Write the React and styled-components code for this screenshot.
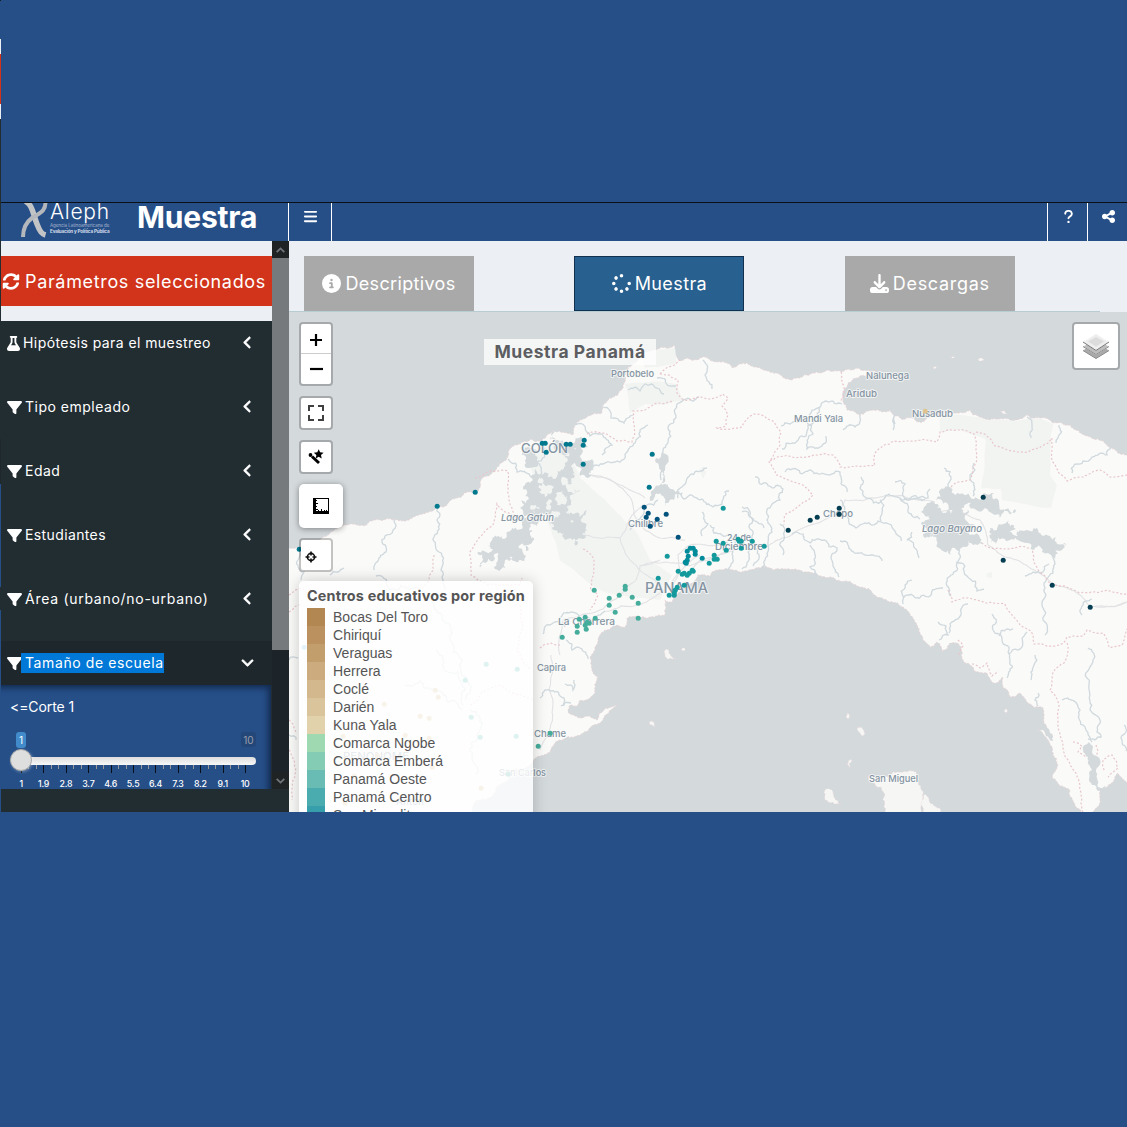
import React from "react";
import styled, { createGlobalStyle, css } from "styled-components";
import { FaBars, FaCircleInfo, FaDownload, FaFilter, FaFlask, FaQuestion, FaShareNodes, FaSpinner, FaAngleLeft, FaAngleDown } from "react-icons/fa6";
import { FaSyncAlt } from "react-icons/fa";

const sans = `Inter, "Open Sans", sans-serif`;

const GlobalStyle = createGlobalStyle`
  * { box-sizing: border-box; }
  body { margin: 0; background: #264f88; font-family: ${sans}; }
`;

const Page = styled.div`
  display: flex;
  width: 1127px;
  height: 1127px;
  background: #264f88;
  overflow: hidden;
`;
const Edge = styled.div`
  display: flex;
  flex-direction: column;
  flex: 0 0 1px;
`;
const EdgeBand = styled.div`
  flex: 0 0 ${(p) => p.$h}px;
  background: ${(p) => p.$c};
`;
const Frame = styled.div`
  flex: 1;
  min-width: 0;
  display: flex;
  flex-direction: column;
  padding-top: 202px;
`;
const Header = styled.header`
  flex: 0 0 39px;
  display: flex;
  border-top: 1px solid #0b1016;
  color: #fff;
  overflow: hidden;
`;
const Brand = styled.div`
  width: 287px;
  display: flex;
  align-items: flex-start;
  padding-left: 19px;
`;
const LogoMark = styled.svg`
  width: 30px;
  height: 38px;
  flex: none;
`;
const LogoWords = styled.div`
  width: 87px;
  display: flex;
  flex-direction: column;
  white-space: nowrap;
`;
const LogoName = styled.span`
  font: 300 21px/18px ${sans};
  letter-spacing: 0.7px;
  height: 20px;
`;
const LogoLine = styled.span`
  font: ${(p) => (p.$bold ? 700 : 400)} 4.6px/5.6px ${sans};
  letter-spacing: ${(p) => p.$ls}px;
  color: ${(p) => (p.$bold ? "#d7dfeb" : "#a3b3cd")};
`;
const Title = styled.h1`
  margin: 0;
  font: 700 30px/28px ${sans};
  letter-spacing: -0.2px;
`;
const HeaderCell = styled.div`
  width: ${(p) => p.$w}px;
  height: 38px;
  border-left: 1px solid #fff;
  border-right: ${(p) => (p.$end ? "1px solid #fff" : "0")};
  display: flex;
  justify-content: center;
  padding: 5.5px 0 0 1px;
  font-size: 15px;
`;
const Spacer = styled.div`
  flex: 1;
`;
const Body = styled.div`
  flex: 0 0 571px;
  display: flex;
  background: #ecf0f5;
`;
const Sidebar = styled.aside`
  flex: 0 0 288px;
  display: flex;
  flex-direction: column;
  background: #222d32;
  padding-bottom: 23px;
`;
const SideView = styled.div`
  flex: 1;
  display: flex;
  min-height: 0;
`;
const SideScroll = styled.div`
  width: 271px;
  height: 548px;
  overflow: hidden;
  display: flex;
  flex-direction: column;
`;
const ParamsWrap = styled.div`
  flex: 0 0 80px;
  padding: 15px 0;
  background: #ecf0f5;
`;
const ParamsButton = styled.button`
  display: flex;
  align-items: center;
  gap: 5px;
  width: 271px;
  height: 50px;
  padding: 0 0 0 1px;
  border: 0;
  background: #d2341b;
  color: #fff;
  font: 400 18px ${sans};
  letter-spacing: 0.66px;
  white-space: nowrap;
  svg { width: 18px; height: 17px; flex: none; }
`;
const Menu = styled.nav`
  display: flex;
  flex-direction: column;
  gap: 20px;
`;
const MenuItem = styled.div`
  height: 44px;
  flex: none;
  display: flex;
  align-items: center;
  padding: 0 17px 0 6px;
  color: #fff;
  background: ${(p) => (p.$active ? "#1e272c" : "transparent")};
  font-size: 14px;
  > svg:first-child { width: ${(p) => (p.$flask ? 13 : 15)}px; height: 15px; flex: none; margin-right: ${(p) => (p.$flask ? 0 : -1)}px; }
  > svg:last-child { margin-left: auto; font-size: 15px; position: relative; top: -1px; stroke: #fff; stroke-width: 24px; }
`;
const MenuText = styled.span`
  padding-left: ${(p) => (p.$flask ? 3 : 4)}px;
  line-height: 20px;
  letter-spacing: ${(p) => p.$ls || 0}px;
  ${(p) => p.$selected && css`background: #0078d7;`}
`;
const Panel = styled.div`
  width: 270px;
  flex: 0 0 104px;
  padding: 11px 15px 0 9px;
  color: #fff;
  background: #264f88;
  box-shadow: inset -5px 5px 6px -2px #132b50;
`;
const PanelLabel = styled.div`
  font-size: 14px;
  line-height: 22px;
  letter-spacing: -0.1px;
`;
const Bubbles = styled.div`
  margin-top: 14px;
  display: flex;
  justify-content: space-between;
  padding-left: 6px;
  height: 25px;
`;
const Bubble = styled.span`
  width: ${(p) => (p.$muted ? 15 : 10)}px;
  height: ${(p) => (p.$muted ? 15 : 16)}px;
  border-radius: 3px;
  font-size: 10px;
  line-height: 16px;
  text-align: center;
  background: ${(p) => (p.$muted ? "#24477a" : "#428bca")};
  color: ${(p) => (p.$muted ? "#9a9fa8" : "#fff")};
`;
const Track = styled.div`
  position: relative;
  height: 8px;
  margin-left: 1px;
  border-radius: 5px;
  background: linear-gradient(#ddd, #f8f8f8);
`;
const Handle = styled.span`
  position: absolute;
  left: -1px;
  top: -8px;
  width: 22px;
  height: 22px;
  border: 1px solid #aaa;
  border-radius: 50%;
  background: #dedede;
  box-shadow: 1px 1px 3px rgba(255, 255, 255, 0.3);
`;
const Ticks = styled.svg`
  display: block;
  width: 246px;
  height: 9px;
`;
const Scale = styled.div`
  display: grid;
  grid-template-columns: repeat(11, 22.4px);
  font-size: 8.8px;
  font-weight: 500;
  line-height: 11px;
  padding-top: 4px;
  text-align: center;
  letter-spacing: -0.2px;
`;
const Scrollbar = styled.div`
  width: 17px;
  display: flex;
  flex-direction: column;
  background: #1c2429;
`;
const ScrollKey = styled.div`
  height: 17px;
  display: flex;
  align-items: center;
  justify-content: center;
  background: #202324;
`;
const Thumb = styled.div`
  height: 392px;
  background: #777a7c;
`;
const Content = styled.main`
  flex: 1;
  min-width: 0;
  display: flex;
  flex-direction: column;
`;
const Tabs = styled.div`
  flex: 0 0 71px;
  width: 811px;
  padding: 15px 0 0 15px;
  display: flex;
  gap: 100.4px;
  border-bottom: 1px solid #b7cdd1;
`;
const Tab = styled.button`
  width: 170px;
  height: 55px;
  flex: none;
  padding: 0;
  display: flex;
  align-items: center;
  justify-content: center;
  gap: 4px;
  color: #fff;
  background: ${(p) => (p.$active ? "#28608f" : "#a9a9a9")};
  border: ${(p) => (p.$active ? "1px solid #12304f" : "0")};
  font: 400 18px ${sans};
  letter-spacing: ${(p) => p.$ls}px;
  svg { width: 19px; height: 19px; }
`;
const MapPane = styled.section`
  position: relative;
  flex: 0 0 500px;
  overflow: hidden;
  background: #d4d9dc;
`;
const MapArt = styled.svg`
  display: block;
  width: 838px;
  height: 500px;
`;
const MapTitle = styled.div`
  position: absolute;
  left: 195px;
  top: 27px;
  width: 172px;
  height: 26px;
  background: rgba(255, 255, 255, 0.75);
  color: #5c5e61;
  font: 700 17.5px/26px ${sans};
  letter-spacing: 0.55px;
  text-align: center;
  white-space: nowrap;
`;
const Controls = styled.div`
  position: absolute;
  left: 10px;
  top: 10px;
  display: flex;
  flex-direction: column;
  gap: 10px;
`;
const Control = styled.div`
  width: 34px;
  border: 2px solid rgba(0, 0, 0, 0.22);
  background: #fff;
  background-clip: padding-box;
  border-radius: 4px;
`;
const ControlCell = styled.div`
  height: ${(p) => p.$h || 30}px;
  display: flex;
  align-items: center;
  justify-content: ${(p) => (p.$left ? "flex-start" : "center")};
  padding: ${(p) => (p.$left ? "4px 0 0 4px" : 0)};
  & + & { border-top: 1px solid #ccc; }
`;
const ZoomControl = styled(Control)`
  height: 64px;
`;
const MeasureControl = styled.div`
  width: 44px;
  height: 44px;
  border-radius: 5px;
  background: #fff;
  box-shadow: 0 1px 6px rgba(0, 0, 0, 0.4);
  display: flex;
  align-items: center;
  justify-content: center;
`;
const Legend = styled.div`
  position: absolute;
  left: 10px;
  top: 269px;
  width: 234px;
  height: 260px;
  padding: 6px 8px;
  border-radius: 5px;
  background: rgba(255, 255, 255, 0.82);
  box-shadow: 0 0 15px rgba(0, 0, 0, 0.2);
  color: #555;
`;
const LegendTitle = styled.div`
  font: 700 14.4px/18px ${sans};
  letter-spacing: 0.18px;
  white-space: nowrap;
  margin-bottom: 3px;
`;
const LegendRow = styled.div`
  display: flex;
  gap: 8px;
  height: 18px;
  font: 14px/18px "Liberation Sans", Arial, sans-serif;
  letter-spacing: 0.03px;
`;
const Swatch = styled.i`
  width: 18px;
  height: 18px;
  background: ${(p) => p.$c};
`;
const LayersControl = styled(Control)`
  position: absolute;
  right: 7px;
  top: 10px;
  width: 48px;
  height: 48px;
  display: flex;
  align-items: center;
  justify-content: center;
`;

/* Roughens a polyline by seeded midpoint displacement, so coasts and rivers look natural. */
function rough(flat, amp = 0.2, close = false, seed = 7) {
  const pts = [];
  for (let i = 0; i < flat.length; i += 2) pts.push([flat[i], flat[i + 1]]);
  if (close) pts.push(pts[0]);
  let s = seed;
  const rnd = () => {
    s = (s * 16807) % 2147483647;
    return s / 2147483647 - 0.5;
  };
  const out = [pts[0]];
  const split = (a, b) => {
    const dx = b[0] - a[0];
    const dy = b[1] - a[1];
    const len = Math.hypot(dx, dy);
    const edge = (a[0] < 288 && b[0] < 288) || (a[0] > 1128 && b[0] > 1128) || (a[1] > 813 && b[1] > 813);
    if (len < 3 || edge) {
      out.push(b);
      return;
    }
    const k = rnd() * 2 * amp;
    const m = [(a[0] + b[0]) / 2 - dy * k, (a[1] + b[1]) / 2 + dx * k];
    split(a, m);
    split(m, b);
  };
  for (let i = 1; i < pts.length; i++) split(pts[i - 1], pts[i]);
  return "M" + out.map((p) => p[0].toFixed(1) + " " + p[1].toFixed(1)).join("L") + (close ? "Z" : "");
}

const land = [280,556,300,547,323,537,357,525,393,520,437,507,475,493,490,475,507,458,512,447,523,442,538,441,547,435,555,429,567,433,573,435,575,425,587,417,602,413,603,405,618,395,625,382,628,367,640,355,655,350,660,348,675,345,678,360,698,360,703,357,717,362,747,363,760,368,777,373,797,378,813,373,842,372,857,368,876,371,860,376,848,383,843,397,847,410,860,415,873,410,890,410,900,418,918,422,930,417,940,415,955,413,970,410,980,417,990,420,1017,420,1027,415,1040,418,1053,423,1070,425,1087,436,1107,445,1130,455,1135,455,1135,785,1127,783,1118,773,1113,782,1100,790,1100,800,1093,812,1093,820,1083,820,1081,810,1070,790,1052,778,1057,763,1052,747,1038,730,1047,727,1043,708,1027,702,1020,693,1010,697,1003,687,1003,677,993,683,987,673,965,663,958,643,950,643,942,652,937,642,930,647,920,633,913,618,903,607,890,602,860,587,840,581,827,578,803,572,773,570,760,568,742,572,698,575,687,585,673,597,672,602,665,600,665,615,640,617,627,618,625,627,618,625,603,632,595,647,590,658,598,677,595,693,580,700,578,705,570,705,568,712,583,718,597,720,617,705,600,723,583,733,560,740,552,747,550,752,540,756,533,762,503,783,477,800,462,820,280,820];

const islands = [
  [664,651,669,650,676,658,673,659,665,656],
  [681,650,685,648,684,651],
  [649,724,652,721,655,727,652,725],
  [824,792,829,789,834,797,841,805,836,804,825,796],
  [889,777,900,772,912,771,918,776,921,789,923,800,921,813,883,813,885,795,875,784,866,775],
  [858,727,864,731,863,736,860,733],
  [847,713,849,714,848,719,846,717],
  [847,764,852,760,850,768],[1004,711,1007,709,1006,713],[923,795,928,797,933,804,940,808,941,813,924,813],
  [978,359,984,360,979,361],[951,357,955,358,952,358],[1001,411,1007,414,1002,413],[933,367,937,368,934,369],
];

const parks = [
  [625,384,676,384,683,400,664,405,646,404,630,413,628,395],
  [640,354,675,348,676,364,645,368],
  [560,440,580,478,605,500,635,530,650,560,672,575,660,600,600,590,560,560,540,500,530,465,540,445],
  [986,440,1051,440,1050,475,1057,485,1051,508,1002,500,1001,489,981,488],
  [940,415,978,417,989,421,987,440,960,430,940,432],
  [987,421,1017,421,1040,418,1053,424,1050,442,985,440],
  [700,470,703,466,706,473,703,479],[986,574,992,572,992,578,987,577],
];

const gatun = [
  [532,478,545,472,553,479,566,466,574,478,568,492,580,490,571,503,579,517,587,510,586,527,579,533,573,520,561,523,552,511,540,514,537,527,530,535,526,551,520,545,516,562,508,552,494,567,501,550,480,568,493,549,487,546,503,539,512,528,522,525,520,508,529,499,525,485],
  [552,515,566,526,576,524,585,535,577,545,575,539,565,540,563,531,554,530],
  [565,465,572,450,580,440,577,452,580,463,573,464,575,474,568,484,560,475],
  [577,449,583,439,588,447,580,456,590,471,580,476,574,459],
  [524,455,537,453,538,463,526,463],[552,432,560,430,566,445,574,443,575,448,568,454,557,444],
];
const islets = [
  [541,489,549,485,552,492,545,497],[556,497,564,495,563,504,557,505],[531,510,536,505,540,508,535,513],
  [561,481,566,478,567,484],[546,503,552,502,551,508,546,507],[538,480,542,478,543,483],[566,512,572,511,570,516],
];
const alajuela = [659,466,663,453,664,471,662,485,672,489,680,492,674,500,665,506,658,494,650,501,654,489,660,485];
const bayano = [
  [936,500,960,494,974,499,984,493,999,503,1015,509,1004,512,993,514,985,508,971,503,943,504],
  [921,512,937,508,951,514,975,525,957,532,972,535,970,541,955,548,937,541,925,534,922,525,930,519],
  [998,526,1016,529,1006,533,1018,536,1016,530,1037,528,1050,536,1057,544,1068,542,1062,550,1054,548,1055,560,1048,553,1037,547,1027,543,1018,540,1005,539],
  [990,528,998,538,996,544,991,542,992,534],
  [923,534,952,529,962,534,980,538,983,545,969,540,965,547,955,548,938,543],
];
const inlet = [
  [1089,742,1092,752,1098,757,1096,770,1098,787,1106,786,1098,791,1092,785,1092,770,1088,757,1083,750],
  [1038,729,1046,736,1053,741,1050,733,1046,727],
];

const rivers = [
  [299,549,298,560,304,572,301,580],[394,520,393,530,385,536,386,552,378,561,374,570],[330,575,338,572,344,568],
  [436,507,437,520,434,537,439,552,441,570,445,590],[508,459,517,472,530,476,538,489],[545,448,537,462,541,474],
  [575,425,590,436,601,434,612,445,602,455],[603,407,611,418,624,423,633,415],[590,473,603,464,615,462,628,451,640,430,648,425],
  [628,390,640,391,645,384,657,388,664,394],[657,378,666,383,676,386],[703,360,705,375,712,389],
  [699,397,686,399,677,404,676,417,668,427,666,445,662,460,661,480],
  [678,498,682,487,690,475,702,471,707,468],[676,492,684,499,690,495,702,499,713,507,722,504,725,492,729,491],
  [702,512,702,536],[658,500,647,505,643,515,636,522,630,530],[710,525,714,533,730,535,738,548],
  [742,507,750,512,757,522,764,528],[755,477,760,484,771,487,783,489,780,500,771,506,767,520,772,532,768,542,765,560,762,569],
  [742,512,752,518,752,536,760,546],[780,524,784,535,783,555],[726,542,726,570],[742,540,742,569],[755,545,753,566],
  [560,619,571,612,579,618,593,621,605,611],[543,634,550,625,560,623,565,627],[566,640,572,650,580,648,588,659],
  [540,698,551,691,564,698,561,706,571,703],[565,684,573,690,574,680],
  [781,426,790,424,804,421,812,410,820,407,842,404],[782,449,793,443,806,436,817,420,820,407],
  [785,472,800,473,812,471,824,474,840,472,842,485,847,492],[805,420,807,449,820,447,826,436],
  [792,534,810,543,824,540,837,548,833,566,839,577],[810,545,810,567,817,575,809,580],
  [840,500,842,514,856,528,865,523,878,521,889,524,895,531,901,541],[861,477,860,488,866,498,882,500,902,500,925,500],
  [895,482,905,484,907,500,928,498,930,489],[880,500,882,512,881,521],[900,499,908,512,920,519],
  [840,541,848,545,858,553,871,555,882,561],[912,532,907,540,916,549,919,558],
  [944,468,951,479,949,490],[974,463,970,475,974,483,973,496],[1072,473,1083,461,1092,457,1107,455,1112,447],
  [956,548,957,563,951,575,951,596],[956,562,967,576,977,591,984,589],[903,604,908,595,930,596,943,588],[904,598,905,585,912,580],
  [949,633,958,619,968,604],[992,614,993,630,1002,640,1009,654,1007,678],[999,636,1007,629,1013,629],[1009,654,1018,650,1027,632],
  [1035,655,1034,665,1031,680],[1048,547,1053,558,1053,573,1045,588,1042,605,1043,620,1045,635],[1049,564,1033,572,1025,576],
  [1038,693,1035,700,1038,706],[1062,700,1080,710,1085,727,1092,742],[1088,648,1093,660,1087,678,1090,701,1097,732,1101,737,1088,739],
  [1124,725,1121,738,1126,751],[1082,615,1082,606,1092,599],[895,424,897,414,893,430],[1027,417,1032,426,1031,438],[1059,425,1058,438,1056,443],[843,430,855,427,860,415],
  [938,622,948,635,939,640],[436,650,442,665,458,672,465,688,463,705],[405,685,432,690,448,702,462,710],[289,735,296,740],
  [289,660,298,658],[470,710,480,730,470,750,476,775],[376,576,390,590,430,600,442,615,450,640,462,660,465,700],
];

const borders = [
  [475,478,508,471,509,500,516,518,505,512,497,504,493,525,470,552,471,575,488,585,520,585,522,578],
  [434,555,428,582,420,590],[587,434,605,433,617,441,632,442,633,411,645,410,657,403,674,401],
  [660,374,676,364,680,360],[660,374,678,380,677,393,685,400,701,397,712,399,723,394,728,398,722,406,728,415,726,426,717,428,742,427,754,414,773,421,781,433,780,445,769,462,776,475,800,484,813,495,800,505,785,515,784,525],
  [841,372,841,402],[770,461,800,457,818,455,833,455,840,467,858,466,875,465,875,453,894,441,910,441,937,442,940,432,957,430,974,434,976,450,970,480,951,487,947,497],
  [976,432,988,437,995,446,1017,452,1039,448,1052,438,1052,460,1067,481,1084,477,1100,470,1110,477,1127,475],
  [970,540,987,547,1015,548,1032,548,1038,570,1050,583,1080,593,1127,594],
  [948,590,952,602,968,598,988,603,1005,604,1018,622,1031,631,1034,644,1064,643,1067,637,1083,636,1087,630,1103,633,1110,648,1122,645,1127,629],
  [1067,643,1064,663,1053,672,1050,690,1059,705,1060,735,1070,765,1080,785,1083,812],
  [583,549,594,560,591,590,598,595,590,610],[540,648,550,643,560,645],[289,595,302,588,308,595],[289,612,302,604],
  [289,720,296,733],[289,750,295,775,292,800],[520,605,517,650,530,670],[470,705,500,685,533,700],
  [1073,742,1082,746,1078,752,1087,757],[1096,745,1097,757,1096,768],[1104,770,1103,760,1112,755,1118,768,1108,777],
  [958,640,963,646,959,655],[972,664,980,668,987,663,992,676,998,671],
];

const roads = [
  [590,475,610,480,630,497,634,515,645,530,660,538,685,540],[560,531,585,535,620,538,630,560,655,580,668,595],[590,475,620,485,645,498],
  [620,538,643,505],[560,655,563,620,603,609,625,590,636,580,640,566,660,560],[551,655,549,690,553,705,548,735,540,750],
  [765,548,790,536,840,511,845,500,880,497,925,500,935,502],[940,512,960,510,980,520,988,545,1003,556,1030,568,1052,584,1080,595,1090,606,1127,602],
  [690,575,700,560,735,550],[672,585,690,562,700,555],[603,612,640,605,665,590],[1127,602,1090,606],
  [670,590,680,570,678,555,690,545,720,545],[640,566,665,562,690,566,725,552],
];

const green = "#46ad9c";
const teal = "#149a9c";
const aqua = "#008b9b";
const petrol = "#00788e";
const navy = "#00537d";
const night = "#053e52";
const sand = "#dfc48f";
const groups = [
  [petrol, [542,443,545,443,546,452,566,444,570,444,584,440,583,445,583,464,652,454,649,487,437,506,475,492,299,549]],
  [navy, [644,507,648,513,646,517,657,519,666,514,650,526,678,537]],
  [night, [788,530,810,520,817,517,839,508,839,514,983,497,1003,560,1052,585,1090,607]],
  [aqua, [690,548,693,548,695,551,695,554,687,551,688,556,687,560,686,563,685,562,702,558]],
  [teal, [723,508,716,541,723,543,726,550,714,555,714,559,717,559,709,563,738,539,739,541,741,541,752,541,741,548,764,546,667,556,658,578,678,571,682,574,684,573,692,570,693,571,689,573,687,575,684,585,677,587,675,590,674,593,674,595,669,595]],
  [green, [594,590,625,586,625,589,619,595,609,598,632,597,638,603,609,605,615,612,638,618,562,637,579,619,585,617,595,618,577,626,577,632,585,625,587,622,586,629,589,623,550,733,538,746,508,774]],
  ["#6abcd2", [304,647]],
  ["#47b4a5", [486,664,517,669,465,680,471,717,480,737,516,736]],
  ["#d8bd8b", [435,690,438,697,384,704,420,716,429,718,405,735,429,738,343,736,377,755,432,767,481,788,345,803,354,776]],
  [sand, [925,411]],
];

const labels = [
  ["Portobelo", 611, 377, 43, 9.5], ["Nalunega", 866, 379, 43, 9.5], ["Aridub", 846, 397, 31, 9.5], ["Nusadub", 912, 417, 41, 9.5],
  ["Mandi Yala", 794, 422, 49, 9.5], ["Chilibre", 628, 527, 35, 9.5], ["24 de", 727, 541, 24, 9.5], ["Diciembre", 715, 550, 48, 9.5],
  ["Chepo", 823, 517, 30, 9.5], ["La Chorrera", 558, 625, 57, 9.5], ["Capira", 537, 671, 29, 9.5], ["Chame", 534, 737, 32, 9.5],
  ["San Carlos", 499, 776, 47, 9.5], ["San Miguel", 869, 782, 49, 9.5], ["COLÓN", 521, 453, 47, 13], ["PANAMA", 645, 593, 63, 14],
  ["PENONOMÉ", 343, 760, 66, 11], ["Antón", 396, 805, 28, 9.5], ["Lago Gatún", 501, 521, 53, 9.5, true], ["Lago Bayano", 922, 532, 60, 9.5, true],
];

function Basemap() {
  return (
    <MapArt viewBox="289 312 838 500">
      <path d={rough(land, 0.17, true)} fill="#fafaf8" stroke="#e8d0d3" strokeWidth="0.8" strokeDasharray="2 1.5" />
      <g fill="#f2f4f2">{parks.map((p, i) => <path key={i} d={rough(p, 0.04, true, i + 3)} />)}</g>
      <g fill="#f6f7f5" stroke="#ead2d5" strokeWidth="0.6" strokeDasharray="2 2">{islands.map((p, i) => <path key={i} d={rough(p, 0.25, true, i + 91)} />)}</g>
      <g fill="none" stroke="#e2e2e5" strokeWidth="1.1">{roads.map((p, i) => <path key={i} d={rough(p, 0.07, false, i + 12)} />)}</g>
      <g fill="none" stroke="#d0d9de" strokeWidth="1.3">{rivers.map((p, i) => <path key={i} d={rough(p, 0.25, false, i * 31 + 50)} />)}</g>
      <g fill="none" stroke="#e8c6cc" strokeWidth="1.2" strokeDasharray="2 2">{borders.map((p, i) => <path key={i} d={rough(p, 0.1, false, i * 17 + 5)} />)}</g>
      <g fill="#d4d9dc">
        {gatun.map((p, i) => <path key={i} d={rough(p, 0.48, true, i + 20)} />)}
        <path d={rough(alajuela, 0.36, true, 9)} />
        {bayano.map((p, i) => <path key={i} d={rough(p, 0.44, true, i + 33)} />)}
        {inlet.map((p, i) => <path key={i} d={rough(p, 0.25, true, i + 43)} />)}
      </g>
      <g fill="#f2f4f2">{islets.map((p, i) => <path key={i} d={rough(p, 0.5, true, i + 61)} />)}</g>
      <g fontFamily={sans} fontWeight="500" fill="#8494a3" stroke="#fafaf8" strokeWidth="2" strokeOpacity=".75" paintOrder="stroke" strokeLinejoin="round">
        {labels.map(([t, x, y, w, size, it]) => (
          <text key={t} x={x} y={y} textLength={w} lengthAdjust="spacingAndGlyphs" fontSize={size} fontStyle={it ? "italic" : "normal"}>{t}</text>
        ))}
      </g>
      {groups.map(([c, pts]) => (
        <g key={c} fill={c}>
          {pts.map((v, i) => (i % 2 ? null : <circle key={i} cx={v + 0.2} cy={pts[i + 1] + 0.2} r="2.5" />))}
        </g>
      ))}
    </MapArt>
  );
}

const legend = [
  ["Bocas Del Toro", "#b38751"], ["Chiriquí", "#bb9160"], ["Veraguas", "#c39e6d"], ["Herrera", "#ccac7f"],
  ["Coclé", "#d3b88d"], ["Darién", "#dac49c"], ["Kuna Yala", "#e2d2ac"], ["Comarca Ngobe", "#9ed9b2"],
  ["Comarca Emberá", "#85ccb4"], ["Panamá Oeste", "#69bcb4"], ["Panamá Centro", "#4bacaf"], ["San Miguelito", "#379fac"],
];

const items = [
  ["Hipótesis para el muestreo", 0.42], ["Tipo empleado", 0.5], ["Edad", 0.5], ["Estudiantes", 0.38], ["Área (urbano/no-urbano)", 0.72], ["Tamaño de escuela", 0.6],
];

const edge = [
  [1, "#111a26"], [38, "#264f88"], [15, "#ecf0f5"], [50, "#d2341b"], [15, "#ecf0f5"], [320, "#222d32"], [45, "#1e282c"],
  [103, "#264f88"], [23, "#222d32"], [517, "#264f88"],
];

const scale = ["1", "1.9", "2.8", "3.7", "4.6", "5.5", "6.4", "7.3", "8.2", "9.1", "10"];

const Arrow = ({ down }) => (
  <svg width="9" height="6" viewBox="0 0 9 6" fill="none" stroke="#70767a" strokeWidth="1.8">
    <path d={down ? "M.7.8 4.5 4.6 8.3.8" : "M.7 5.2 4.5 1.4 8.3 5.2"} />
  </svg>
);

export default function App() {
  return (
    <Page>
      <GlobalStyle />
      <Edge>{edge.map(([h, c], i) => <EdgeBand key={i} $h={h} $c={c} />)}</Edge>
      <Frame>
        <Header>
          <Brand>
            <LogoMark viewBox="0 0 30 38" fill="none">
              <path d="M5.5-2C13 3 13 11 17 21 20 29 22 31 25.5 32" stroke="#c3c4c6" strokeWidth="5.5" />
              <path d="M25.5-2C26 9 19 10 12 15 5 20 3 26 3 34" stroke="#b4b7bc" strokeWidth="4" />
            </LogoMark>
            <LogoWords>
              <LogoName>Aleph</LogoName>
              <LogoLine $ls={-0.1}>Agencia Latinoamericana de</LogoLine>
              <LogoLine $bold $ls={-0.15}>Evaluación y Política Pública</LogoLine>
            </LogoWords>
            <Title>Muestra</Title>
          </Brand>
          <HeaderCell $w={44} $end><FaBars /></HeaderCell>
          <Spacer />
          <HeaderCell $w={40}><FaQuestion /></HeaderCell>
          <HeaderCell $w={40}><FaShareNodes /></HeaderCell>
        </Header>
        <Body>
          <Sidebar>
            <SideView>
              <SideScroll>
                <ParamsWrap>
                  <ParamsButton><FaSyncAlt />Parámetros seleccionados</ParamsButton>
                </ParamsWrap>
                <Menu>
                  {items.map(([t, ls], i) => (
                    <MenuItem key={t} $flask={i === 0} $active={i === 5}>
                      {i === 0 ? <FaFlask /> : <FaFilter />}
                      <MenuText $flask={i === 0} $ls={ls} $selected={i === 5}>{t}</MenuText>
                      {i === 5 ? <FaAngleDown /> : <FaAngleLeft />}
                    </MenuItem>
                  ))}
                </Menu>
                <Panel>
                  <PanelLabel>&lt;=Corte 1</PanelLabel>
                  <Bubbles><Bubble>1</Bubble><Bubble $muted>10</Bubble></Bubbles>
                  <Track><Handle /></Track>
                  <Ticks>
                    {Array.from({ length: 31 }, (_, i) => (
                      <rect key={i} x={Math.round(11 + i * 7.47)} y="0" width="1" height={i % 3 ? 4 : 8} fill={i % 3 ? "#999" : "#0a0f18"} />
                    ))}
                  </Ticks>
                  <Scale>{scale.map((v) => <span key={v}>{v}</span>)}</Scale>
                </Panel>
              </SideScroll>
              <Scrollbar>
                <ScrollKey><Arrow /></ScrollKey>
                <Thumb />
                <Spacer />
                <ScrollKey><Arrow down /></ScrollKey>
              </Scrollbar>
            </SideView>
          </Sidebar>
          <Content>
            <Tabs>
              <Tab $ls={0.35}><FaCircleInfo />Descriptivos</Tab>
              <Tab $ls={0.4} $active><FaSpinner />Muestra</Tab>
              <Tab $ls={0.7}><FaDownload />Descargas</Tab>
            </Tabs>
            <MapPane>
              <Basemap />
              <MapTitle>Muestra Panamá</MapTitle>
              <Legend>
                <LegendTitle>Centros educativos por región</LegendTitle>
                {legend.map(([t, c]) => <LegendRow key={t}><Swatch $c={c} />{t}</LegendRow>)}
              </Legend>
              <Controls>
                <ZoomControl>
                  <ControlCell $h={29}><svg width="14" height="14" stroke="#000" strokeWidth="2.2"><path d="M1 8h12M7 2v12" /></svg></ControlCell>
                  <ControlCell $h={31}><svg width="14" height="14" stroke="#000" strokeWidth="2.2"><path d="M1 7h13" /></svg></ControlCell>
                </ZoomControl>
                <Control>
                  <ControlCell><svg width="16" height="16" fill="none" stroke="#404040" strokeWidth="2"><path d="M1 6V1h5M10 1h5v5M15 10v5h-5M6 15H1v-5" /></svg></ControlCell>
                </Control>
                <Control>
                  <ControlCell>
                    <svg width="16" height="16" viewBox="0 0 16 16">
                      <path d="M4 7.5 11 14" stroke="#000" strokeWidth="3" />
                      <circle cx="2.5" cy="6" r="1.9" />
                      <path d="M10.7.2l1.4 3.1 3.5.4-2.6 2.3.7 3.5-3-1.8-3 1.8.7-3.5L5.8 3.7l3.5-.4z" />
                    </svg>
                  </ControlCell>
                </Control>
                <MeasureControl>
                  <svg width="16" height="16" fill="none" stroke="#000">
                    <path d="M0 .5h16M15.5 0v16" /><path d="M1.5 0v16M0 14.5h16" strokeWidth="3" />
                    <path d="M3 2.5h1M3 5.5h2M3 8.5h1M3 11.5h2M5.5 12v1M8.5 11v2M11.5 12v1M13.5 12v1" />
                  </svg>
                </MeasureControl>
                <Control>
                  <ControlCell $left>
                    <svg width="12" height="12" viewBox="0 0 12 12" fill="none" stroke="#111" strokeWidth="1.6">
                      <circle cx="6" cy="6" r="3.6" /><path d="M6 .5v4M6 7.5v4M.5 6h4M7.5 6h4" />
                    </svg>
                  </ControlCell>
                </Control>
              </Controls>
              <LayersControl>
                <svg width="26" height="26" viewBox="0 0 26 26">
                  <path d="M0 17.5 13 25.5 26 17.5 13 9.5Z" fill="#aaa" />
                  <path d="M0 13.5 13 21.5 26 13.5 13 5.5Z" fill="#bdbdbd" stroke="#fff" strokeWidth=".8" />
                  <path d="M0 17.5 13 25.5 26 17.5M0 13.5 13 21.5 26 13.5" fill="none" stroke="#8a8a8a" />
                  <path d="M0 9 13 17.5 26 9 13 .7Z" fill="#eee" stroke="#fff" strokeWidth=".5" />
                  <path d="M5 8.5 13 4l8 4.5-8 5z" fill="#dcdcdc" />
                  <path d="M0 9 13 17.5 26 9" fill="none" stroke="#777" />
                </svg>
              </LayersControl>
            </MapPane>
          </Content>
        </Body>
      </Frame>
    </Page>
  );
}
